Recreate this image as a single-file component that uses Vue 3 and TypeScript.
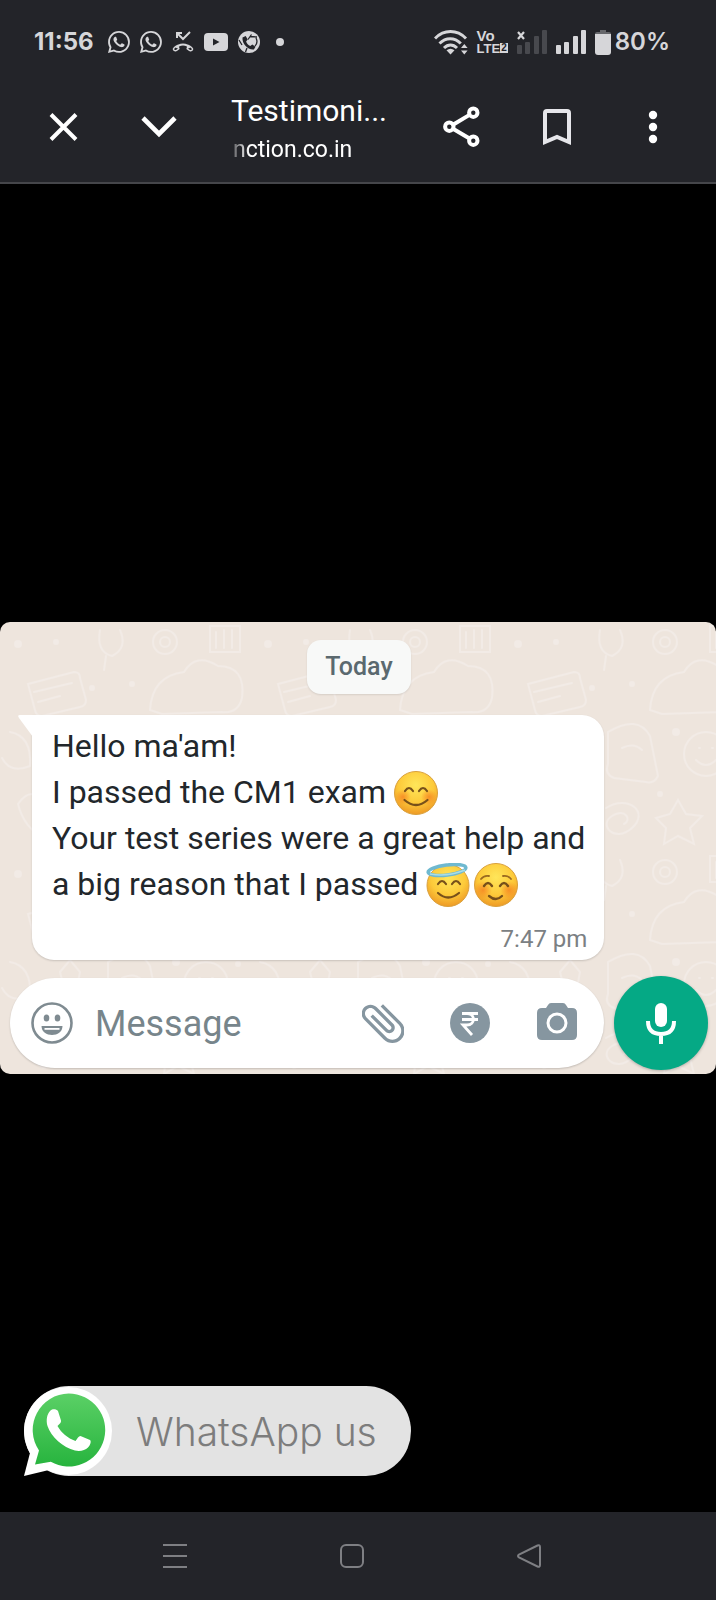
<script setup lang="ts">
import { ref } from 'vue'

const draft = ref('')
const signalBars = [
  { x: 0, y: 15, h: 9 },
  { x: 8, y: 12, h: 12 },
  { x: 17, y: 6, h: 18 },
  { x: 25, y: 0, h: 24 },
]
const whatsappPath =
  'M13.601 2.326A7.85 7.85 0 0 0 7.994 0C3.627 0 .068 3.558.064 7.926c0 1.399.366 2.76 1.057 3.965L0 16l4.204-1.102a7.9 7.9 0 0 0 3.79.965h.004c4.368 0 7.926-3.558 7.93-7.93A7.9 7.9 0 0 0 13.6 2.326zM7.994 14.521a6.6 6.6 0 0 1-3.356-.92l-.24-.144-2.494.654.666-2.433-.156-.251a6.56 6.56 0 0 1-1.007-3.505c0-3.626 2.957-6.584 6.591-6.584a6.56 6.56 0 0 1 4.66 1.931 6.56 6.56 0 0 1 1.928 4.66c-.004 3.639-2.961 6.592-6.592 6.592m3.615-4.934c-.197-.099-1.17-.578-1.353-.646-.182-.065-.315-.099-.445.099-.133.197-.513.646-.627.775-.114.133-.232.148-.43.05-.197-.1-.836-.308-1.592-.985-.59-.525-.985-1.175-1.103-1.372-.114-.198-.011-.304.088-.403.087-.088.197-.232.296-.346.1-.114.133-.198.198-.33.065-.134.034-.248-.015-.347-.05-.099-.445-1.076-.612-1.47-.16-.389-.323-.335-.445-.34-.114-.007-.247-.007-.38-.007a.73.73 0 0 0-.529.247c-.182.198-.691.677-.691 1.654s.71 1.916.81 2.049c.098.133 1.394 2.132 3.383 2.992.47.205.84.326 1.129.418.475.152.904.129 1.246.08.38-.058 1.171-.48 1.338-.943.164-.464.164-.86.114-.943-.049-.084-.182-.133-.38-.232'
</script>

<template>
  <div class="screen">
    <div class="status">
      <span class="clock">11:56</span>
      <div class="notifications">
        <svg v-for="n in 2" :key="n" width="22" height="22" viewBox="0 0 16 16"><path :d="whatsappPath" fill="currentColor" /></svg>
        <svg width="22" height="22" viewBox="0 0 22 22" fill="none" stroke="currentColor" stroke-width="2">
          <path d="M5 2l6 6 7-7M5 7V2h5" />
          <path d="M4.500 17C7 12.300 15 12.300 17.500 17" stroke-width="2.200" />
          <path d="M5.800 14.500l1 3.200-2.300 1.800c-1 .7-2.500 0-3-1-.5-1 1.800-3 4.300-4zM16.200 14.500l-1 3.200 2.300 1.800c1 .7 2.500 0 3-1 .5-1-1.800-3-4.300-4z" stroke-width="1.500" />
        </svg>
        <svg width="24" height="22" viewBox="0 0 24 22"><rect y="2" width="24" height="18" rx="4" fill="currentColor" /><path d="M9 7.500v7l6.500-3.500z" fill="#232429" /></svg>
        <svg width="22" height="22" viewBox="0 0 22 22">
          <circle cx="11" cy="11" r="11" fill="currentColor" />
          <path d="M4.500 6.500L7.700 5l2 3.500-1.600 1.900c.8 2.100 2.100 3.500 4.200 4.500l2-1.500 3.200 2.300-1.600 2.800C10.500 19.500 3.800 13 4.500 6.500z" fill="#232429" />
          <path d="M10 8.500l3.500-5M12 5.500l7 .5M18 7c1.500 3 1 6-1 8M7.500 21l1.500-4M1 9l3 5" fill="none" stroke="#232429" stroke-width="1.300" />
        </svg>
        <svg width="8" height="22" viewBox="0 0 8 22" class="more-dot"><circle cx="4" cy="11" r="4" fill="currentColor" /></svg>
      </div>
      <div class="radio">
        <svg width="34" height="26" viewBox="0 0 34 26" fill="none" stroke="currentColor" stroke-width="3">
          <path d="M1 9.500C10 .3 23 .3 32 9.500M5.500 14.500c6.300-6.300 15-6.300 21.300 0M10 19c4-4 9-4 13 0" />
          <path d="M16.500 25.500l-4-4.300q4-3 8 0z" fill="currentColor" stroke="none" />
          <path d="M27 19l3.300-4 3.300 4zM27 21.500l3.300 4 3.300-4z" fill="currentColor" stroke="none" />
        </svg>
        <div class="volte">
          <span class="vo">Vo</span>
          <span class="lte">LTE<b>2</b></span>
        </div>
        <svg width="30" height="24" viewBox="0 0 30 24">
          <g fill="#48494e"><rect v-for="b in signalBars" :key="b.x" :x="b.x" :y="b.y" width="5" :height="b.h" rx="1" /></g>
          <path d="M1 2l6 7M7 2L1 9" stroke="currentColor" stroke-width="2.200" />
        </svg>
        <svg width="30" height="24" viewBox="0 0 30 24" fill="currentColor">
          <rect v-for="b in signalBars" :key="b.x" :x="b.x" :y="b.y" width="5" :height="b.h" rx="1" />
        </svg>
        <div class="battery">
          <svg width="16" height="26" viewBox="0 0 16 26">
            <path d="M5 1h6v2h3q2 0 2 2v2H0V5q0-2 2-2h3z" fill="#66676b" />
            <path d="M0 5h16v18q0 3-3 3H3q-3 0-3-3z" fill="currentColor" />
          </svg>
          <span class="percent">80%</span>
        </div>
      </div>
    </div>

    <header class="toolbar">
      <button class="tool" aria-label="Close">
        <svg width="48" height="48" viewBox="0 0 48 48" fill="none" stroke="currentColor" stroke-width="4"><path d="M12 11.500l25 25M37 11.500l-25 25" /></svg>
      </button>
      <button class="tool" aria-label="Minimise">
        <svg width="48" height="48" viewBox="0 0 48 48" fill="none" stroke="currentColor" stroke-width="4.600"><path d="M8 15l16 16 16-16" /></svg>
      </button>
      <div class="titles">
        <h1>Testimoni...</h1>
        <p>nction.co.in</p>
      </div>
      <button class="tool" aria-label="Share">
        <svg width="48" height="48" viewBox="0 0 48 48" fill="none" stroke="currentColor" stroke-width="4">
          <path d="M16 21.700l16.500-9.800M16 25.700l16.500 9.800" />
          <circle cx="36.300" cy="9.700" r="4.200" /><circle cx="12.300" cy="23.700" r="4.200" /><circle cx="36.300" cy="37.700" r="4.200" />
        </svg>
      </button>
      <button class="tool dim" aria-label="Bookmark">
        <svg width="48" height="48" viewBox="0 0 48 48" fill="none" stroke="currentColor" stroke-width="4"><path d="M12 39V10q0-2 2-2h20q2 0 2 2v29l-12-5z" /></svg>
      </button>
      <button class="tool" aria-label="More options">
        <svg width="48" height="48" viewBox="0 0 48 48" fill="currentColor"><circle cx="24" cy="12" r="4.200" /><circle cx="24" cy="24" r="4.200" /><circle cx="24" cy="36" r="4.200" /></svg>
      </button>
    </header>

    <main class="stage">
      <section class="chat">
        <svg class="wallpaper" width="100%" height="100%" aria-hidden="true">
          <defs>
            <pattern id="doodles" width="250" height="230" patternUnits="userSpaceOnUse">
              <g fill="none" stroke="#f2ebe6" stroke-width="2" stroke-linecap="round">
                <path d="M28 62l46-12q6 0 6 6l6 22q0 6-6 7l-38 9q-6 0-7-6zM34 70l38-9M38 80l22-6" />
                <path d="M100 8q-4 22 12 26 16-8 8-26M106 34l-2 14M150 88q2-34 34-38 12-20 34-6 28 0 24 32-4 16-20 14l-60 2z" />
                <circle cx="165" cy="20" r="12" /><circle cx="165" cy="20" r="5" />
                <path d="M210 4h30v26h-30zM216 10v16M224 8v18M232 8v18" />
                <path d="M10 110q22 4 20 34-20 8-28-8M60 120l10-12 10 12-3 16H64z" />
                <path d="M108 110q30-18 42 4l8 40q-4 8-12 6l-32-4q-10-4-6-14zM122 126q12-6 20 2" />
                <circle cx="206" cy="132" r="22" /><path d="M196 138q10 10 20 0M199 126h1M212 126h1" />
                <path d="M18 182q14-20 28 0 14-20 26 0-10 28-28 34-20-10-26-34z" />
                <path d="M106 186c22-14 44 4 26 20s-34-4-20-12 20 4 12 8M178 178l8 14 16 2-12 12 4 16-16-8-14 8 2-16-10-10 14-4z" />
                <path d="M226 182q14 4 12 22M218 190q8 4 8 16" />
              </g>
              <g fill="#f2ebe6">
                <circle cx="92" cy="66" r="3" /><circle cx="132" cy="62" r="3" /><circle cx="18" cy="22" r="4" />
                <circle cx="56" cy="20" r="3" /><circle cx="176" cy="110" r="4" /><circle cx="90" cy="156" r="4" />
                <circle cx="84" cy="204" r="3" /><circle cx="238" cy="112" r="3" /><circle cx="160" cy="172" r="3" />
              </g>
            </pattern>
          </defs>
          <rect width="100%" height="100%" fill="url(#doodles)" />
        </svg>

        <div class="day">Today</div>

        <article class="bubble">
          <svg class="tail" width="15" height="22" viewBox="0 0 15 22" aria-hidden="true"><path d="M15 0H2Q-1 0 1 3l14 19z" fill="#fff" /></svg>
          <p class="message">
            Hello ma'am!<br />
            I passed the CM1 exam
            <svg class="emoji" viewBox="0 0 48 44" role="img" aria-label="Smiling face">
              <defs>
                <radialGradient id="face" cx="50%" cy="32%" r="68%">
                  <stop offset="0" stop-color="#ffe65a" /><stop offset=".6" stop-color="#fdca3a" /><stop offset="1" stop-color="#ee9a25" />
                </radialGradient>
                <radialGradient id="blush"><stop offset="0" stop-color="#f57d20" stop-opacity=".75" /><stop offset="1" stop-color="#f57d20" stop-opacity="0" /></radialGradient>
              </defs>
              <circle cx="22" cy="22" r="21.500" fill="url(#face)" stroke="#d9a03c" />
              <circle cx="9" cy="26" r="8" fill="url(#blush)" /><circle cx="35" cy="26" r="8" fill="url(#blush)" />
              <path d="M11 20q4-6 8 0M25 20q4-6 8 0M10.500 29q11.500 10 23 0" fill="none" stroke="#77501a" stroke-width="2.200" stroke-linecap="round" />
            </svg><br />
            Your test series were a great help and a big reason that I passed
            <svg class="emoji" viewBox="0 0 48 44" role="img" aria-label="Smiling face with halo">
              <circle cx="22" cy="22.500" r="21" fill="url(#face)" stroke="#d9a03c" />
              <ellipse cx="21" cy="7" rx="19" ry="5" transform="rotate(-7 21 7)" fill="none" stroke="#6fb9d0" stroke-width="3.500" />
              <path d="M4 11q18 3 35-4" fill="none" stroke="#a8dde7" stroke-width="1.500" />
              <path d="M12 21q4-6 8 0M26 21q4-6 8 0M12 30q10 9 21 0" fill="none" stroke="#77501a" stroke-width="2.200" stroke-linecap="round" />
            </svg><svg class="emoji" viewBox="0 0 48 44" role="img" aria-label="Blushing face">
              <circle cx="22" cy="22" r="21.500" fill="url(#face)" stroke="#d9a03c" />
              <circle cx="9" cy="27" r="9" fill="url(#blush)" /><circle cx="35" cy="27" r="9" fill="url(#blush)" />
              <path d="M10 23q4-6 8 0M26 23q4-6 8 0M15 33q7 6 13 0" fill="none" stroke="#77501a" stroke-width="2.400" stroke-linecap="round" />
              <path d="M7 16q3-4 8-3M29 13q5-1 8 3" fill="none" stroke="#9a6a20" stroke-width="1.800" stroke-linecap="round" />
            </svg>
          </p>
          <time class="sent">7:47 pm</time>
        </article>

        <form class="compose" @submit.prevent>
          <div class="field">
            <button type="button" class="icon" aria-label="Emoji">
              <svg width="42" height="42" viewBox="0 0 42 42">
                <circle cx="21" cy="21" r="19.500" fill="none" stroke="currentColor" stroke-width="2.600" />
                <ellipse cx="15.500" cy="16" rx="2.800" ry="3.500" fill="currentColor" /><ellipse cx="26.500" cy="16" rx="2.800" ry="3.500" fill="currentColor" />
                <path d="M10.500 24h21c0 12-21 12-21 0z" fill="currentColor" /><path d="M13.500 26h15v1.800h-15z" fill="#fff" />
              </svg>
            </button>
            <input v-model="draft" type="text" placeholder="Message" aria-label="Message" />
            <div class="actions">
              <button type="button" class="icon" aria-label="Attach">
                <svg width="42" height="42" viewBox="2.500 2.500 19 19"><path transform="rotate(-45 12 12)" d="M16.500 6v11.500c0 2.210-1.790 4-4 4s-4-1.790-4-4V5c0-1.380 1.120-2.500 2.500-2.500s2.500 1.120 2.500 2.500v10.500c0 .55-.45 1-1 1s-1-.45-1-1V6H10v9.500c0 1.380 1.120 2.500 2.500 2.500s2.500-1.120 2.500-2.500V5c0-2.210-1.790-4-4-4S7 2.790 7 5v12.500c0 3.040 2.460 5.500 5.500 5.500s5.500-2.460 5.500-5.500V6h-1.500z" fill="currentColor" /></svg>
              </button>
              <button type="button" class="icon" aria-label="Pay">
                <svg width="42" height="42" viewBox="0 0 42 42">
                  <circle cx="21" cy="21" r="20" fill="currentColor" />
                  <path d="M13 11.500h16M13 17.500h16M13 11.500h5c8.500 0 8.500 11.500 0 11.500h-4l9 10" fill="none" stroke="#fff" stroke-width="2.800" />
                </svg>
              </button>
              <button type="button" class="icon" aria-label="Camera">
                <svg width="42" height="42" viewBox="0 0 42 42">
                  <path d="M15 1h12q2 0 3 2l2 3h4q5 0 5 5v22q0 5-5 5H6q-5 0-5-5V11q0-5 5-5h4l2-3q1-2 3-2z" fill="currentColor" />
                  <circle cx="21" cy="21" r="9" fill="none" stroke="#fff" stroke-width="3" />
                </svg>
              </button>
            </div>
          </div>
          <button type="button" class="mic" aria-label="Record voice message">
            <svg width="48" height="48" viewBox="0 0 48 48">
              <rect x="18" y="4" width="12" height="24" rx="6" fill="#fff" />
              <path d="M11 22q0 13 13 13t13-13M24 35v10" fill="none" stroke="#fff" stroke-width="4" />
            </svg>
          </button>
        </form>
      </section>

      <a class="contact" href="#whatsapp">
        <svg width="88" height="90" viewBox="0 0 88 90" aria-hidden="true">
          <defs><linearGradient id="leaf" x1="0" y1="0" x2="0" y2="1"><stop offset="0" stop-color="#5bd066" /><stop offset="1" stop-color="#27b43e" /></linearGradient></defs>
          <circle cx="44" cy="45" r="44" fill="#fff" />
          <path d="M6.500 65L0 90l25-6z" fill="#fff" />
          <path d="M44.700 7.500a36.500 36.500 0 1 1-17.900 68.300L11 78.500l4-14A36.500 36.500 0 0 1 44.700 7.500z" fill="url(#leaf)" />
          <path d="M26.500 24.500c2-2 6-1.500 7.500.5l3 9.500c.5 2-1.500 3.500-3.500 5.500 4 7 10 12 18 15 1.500-2 3-5 5-5l9.500 4c1.500 1 .5 5-2 7.500-3 3-8 4-13 3C39 61.500 27 51 23.500 40c-1.500-5.500-.8-12 3-15.500z" fill="#fff" />
        </svg>
        <span>WhatsApp us</span>
      </a>
    </main>

    <nav class="system">
      <button aria-label="Recent apps"><svg width="26" height="26" viewBox="0 0 26 26"><path d="M1 2h24M1 13h24M1 24h24" /></svg></button>
      <button aria-label="Home"><svg width="26" height="26" viewBox="0 0 26 26"><rect x="2" y="2" width="22" height="22" rx="5" /></svg></button>
      <button aria-label="Back"><svg width="26" height="26" viewBox="0 0 26 26"><path d="M21.500 2.500L3 11.500q-2 1.500 0 3l18.500 9q2.500 1 2.500-1.500V4q0-2.500-2.500-1.500z" /></svg></button>
    </nav>
  </div>
</template>

<style>
body {
  margin: 0;
  background: #000;
}
</style>

<style scoped>
.screen {
  display: flex;
  flex-direction: column;
  min-height: 100vh;
  background: #000;
  font-family: Roboto, "Liberation Sans", sans-serif;
}
svg {
  display: block;
  flex-shrink: 0;
}
button {
  display: grid;
  place-items: center;
  padding: 0;
  border: 0;
  background: none;
  color: inherit;
}
h1,
p {
  margin: 0;
  font-weight: 400;
}
.status {
  display: flex;
  align-items: center;
  box-sizing: border-box;
  height: 72px;
  padding: 11px 46px 0 34px;
  background: #232429;
  color: #d6d6d9;
  font-family: Inter, sans-serif;
}
.clock {
  font-size: 24px;
  font-weight: 700;
}
.notifications {
  display: flex;
  gap: 10px;
  margin-left: 14px;
}
.more-dot {
  margin-left: 6px;
}
.radio {
  display: flex;
  align-items: center;
  gap: 9px;
  margin-left: auto;
}
.volte {
  display: flex;
  flex-direction: column;
  font-family: "Liberation Sans", sans-serif;
  font-weight: 700;
}
.vo {
  font-size: 15px;
  line-height: 13px;
}
.lte {
  display: flex;
  align-items: center;
  font-size: 13px;
  line-height: 13px;
}
.lte b {
  padding: 0 1px;
  background: #d6d6d9;
  color: #232429;
  font-size: 10px;
  line-height: 10px;
}
.battery {
  display: flex;
  align-items: center;
  gap: 4px;
}
.percent {
  font-size: 24px;
  font-weight: 600;
}
.toolbar {
  display: flex;
  align-items: center;
  gap: 48px;
  height: 110px;
  padding: 0 39px;
  border-bottom: 2px solid #45464a;
  background: #232429;
  color: #fff;
}
.tool.dim {
  color: #e6e6ea;
}
.titles {
  flex: 1;
  min-width: 0;
  padding-top: 6px;
  white-space: nowrap;
}
.titles h1 {
  font-size: 30px;
  line-height: 40px;
}
.titles p {
  padding-left: 2px;
  font-size: 23px;
  line-height: 38px;
  mask-image: linear-gradient(to right, rgb(0 0 0 / 20%), #000 18px);
}
.stage {
  position: relative;
  display: flex;
  flex: 1;
  flex-direction: column;
  justify-content: center;
}
.chat {
  position: relative;
  display: flex;
  flex-direction: column;
  overflow: hidden;
  padding: 18px 8px 4px 10px;
  border-radius: 10px;
  background: #eee5dd;
}
.wallpaper {
  position: absolute;
  inset: 0;
}
.day {
  position: relative;
  align-self: center;
  padding: 0 18px;
  border-radius: 14px;
  background: #f8f9f8;
  box-shadow: 0 1px 2px rgb(0 0 0 / 10%);
  color: #5b696f;
  font-size: 25px;
  font-weight: 500;
  line-height: 54px;
}
.bubble {
  position: relative;
  box-sizing: border-box;
  width: 82%;
  margin: 21px 0 0 22px;
  padding: 8px 17px 7px 20px;
  border-radius: 0 22px 22px 22px;
  background: #fff;
  box-shadow: 0 1px 2px rgb(0 0 0 / 16%);
}
.tail {
  position: absolute;
  top: 0;
  left: -14px;
}
.message {
  color: #22272b;
  font-size: 32px;
  line-height: 46px;
}
.emoji {
  display: inline-block;
  width: 48px;
  height: 44px;
  vertical-align: -12px;
}
.sent {
  display: block;
  margin-top: 18px;
  color: #7b8083;
  font-size: 24px;
  line-height: 28px;
  text-align: right;
}
.compose {
  position: relative;
  display: flex;
  align-items: center;
  gap: 10px;
  margin-top: 16px;
}
.field {
  display: flex;
  flex: 1;
  align-items: center;
  gap: 22px;
  box-sizing: border-box;
  min-width: 0;
  height: 90px;
  padding: 0 26px 0 21px;
  border-radius: 45px;
  background: #fff;
  box-shadow: 0 1px 2px rgb(0 0 0 / 18%);
}
.icon {
  color: #8696a0;
}
.field > .icon {
  color: #7f8b91;
}
.field input {
  flex: 1;
  min-width: 0;
  padding: 2px 0 0;
  border: 0;
  outline: 0;
  background: none;
  color: #22272b;
  font: 36px/44px Roboto, "Liberation Sans", sans-serif;
}
.field input::placeholder {
  color: #77858b;
  opacity: 1;
}
.actions {
  display: flex;
  gap: 45px;
}
.mic {
  width: 94px;
  height: 94px;
  border-radius: 50%;
  background: #05a985;
  box-shadow: 0 1px 3px rgb(0 0 0 / 25%);
}
.contact {
  position: absolute;
  bottom: 36px;
  left: 24px;
  display: flex;
  align-items: center;
  gap: 24px;
  padding-right: 34px;
  border-radius: 45px;
  background: #e3e3e3;
  color: #7d7d7d;
  font-family: Inter, sans-serif;
  font-size: 39px;
  font-weight: 300;
  text-decoration: none;
}
.system {
  display: flex;
  align-items: center;
  justify-content: center;
  gap: 151px;
  height: 88px;
  padding-right: 12px;
  background: #232429;
}
.system svg {
  fill: none;
  stroke: #7e7f83;
  stroke-width: 2;
}
</style>
